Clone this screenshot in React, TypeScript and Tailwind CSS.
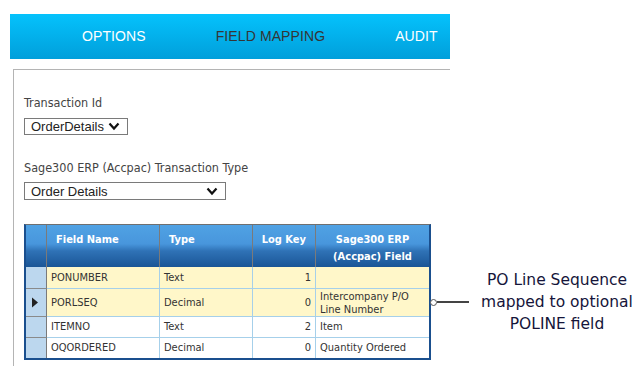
import React from 'react'

const gridFont = { fontFamily: '"DejaVu Sans Condensed", "DejaVu Sans", sans-serif' }

interface Row {
  name: string
  type: string
  logKey: string
  field: string[]
  tall?: boolean
  yellow?: boolean
  current?: boolean
}

const rows: Row[] = [
  { name: 'PONUMBER', type: 'Text', logKey: '1', field: [], yellow: true },
  { name: 'PORLSEQ', type: 'Decimal', logKey: '0', field: ['Intercompany P/O', 'Line Number'], tall: true, yellow: true, current: true },
  { name: 'ITEMNO', type: 'Text', logKey: '2', field: ['Item'] },
  { name: 'OQORDERED', type: 'Decimal', logKey: '0', field: ['Quantity Ordered'] },
]

const Chevron = () => (
  <svg width="12" height="9" viewBox="0 0 12 9" className="shrink-0">
    <path d="M1.5 1.5 L6 6.5 L10.5 1.5" fill="none" stroke="#111" strokeWidth="2.2" />
  </svg>
)

const Select: React.FC<{ value: string; width: string; height: string }> = ({ value, width, height }) => (
  <div
    className={`flex items-center justify-between border border-[#7a7a7a] pl-[6px] pr-[7px] text-[13px] leading-none text-[#222] ${width} ${height}`}
    style={{ fontFamily: '"Liberation Sans", Arial, sans-serif' }}
  >
    <span>{value}</span>
    <Chevron />
  </div>
)

const GridTable = () => (
  <div className="w-[407px] shrink-0 border-x-2 border-b-2 border-t border-x-[#1a4f8e] border-b-[#1a4f8e] border-t-[#6f6f6f]" style={gridFont}>
    <div
      className="flex h-[42px] text-[11px] font-bold leading-[17px] text-white"
      style={{ background: 'linear-gradient(to bottom, #50a2e4 0%, #4896dc 45%, #2f72b6 62%, #1a5596 100%)' }}
    >
      <div className="w-[21px] shrink-0 border-r border-[#7a7a7a]" />
      <div className="w-[113px] shrink-0 border-r border-[#7a7a7a] pl-[9px] pt-[6px]">Field Name</div>
      <div className="w-[93px] shrink-0 border-r border-[#7a7a7a] pl-[9px] pt-[6px]">Type</div>
      <div className="w-[63px] shrink-0 border-r border-[#7a7a7a] pr-[9px] pt-[6px] text-right">Log Key</div>
      <div className="flex-1 pt-[6px] text-center">
        Sage300 ERP
        <br />
        (Accpac) Field
      </div>
    </div>
    {rows.map((r, i) => (
      <div
        key={r.name}
        className={`flex text-[11px] text-[#333] ${r.tall ? 'h-[28px] leading-[13px]' : 'h-[21px] leading-[20px]'} ${r.yellow ? 'bg-[#fff7c9]' : 'bg-white'}`}
      >
        <div className={`flex w-[21px] shrink-0 items-center justify-center border-r border-[#7a7a7a] bg-[#bcd7ee] ${i > 0 ? 'border-t border-t-[#8a8a8a]' : ''}`}>
          {r.current && (
            <svg width="8" height="11" viewBox="0 0 8 11" className="-ml-[2px]">
              <path d="M1 0.5 L7 5.5 L1 10.5 Z" fill="#222" />
            </svg>
          )}
        </div>
        <div className={`flex w-[113px] shrink-0 items-center border-r border-[#a6d0ea] pl-[4px] ${i > 0 ? 'border-t border-t-[#a6d0ea]' : ''}`}>{r.name}</div>
        <div className={`flex w-[93px] shrink-0 items-center border-r border-[#a6d0ea] pl-[4px] ${i > 0 ? 'border-t border-t-[#a6d0ea]' : ''}`}>{r.type}</div>
        <div className={`flex w-[63px] shrink-0 items-center justify-end border-r border-[#a6d0ea] pr-[4px] ${i > 0 ? 'border-t border-t-[#a6d0ea]' : ''}`}>{r.logKey}</div>
        <div className={`flex flex-1 flex-col justify-center pl-[4px] ${i > 0 ? 'border-t border-t-[#a6d0ea]' : ''}`}>
          {r.field.map((f) => (
            <span key={f}>{f}</span>
          ))}
        </div>
      </div>
    ))}
  </div>
)

const Callout = () => (
  <div className="mt-[45px] flex items-center">
    <div className="ml-[-1px] h-[7px] w-[7px] shrink-0 rounded-full border-[1.5px] border-[#555] bg-white" />
    <div className="h-[2px] w-[32px] shrink-0 bg-[#444]" />
    <div
      className="ml-[6px] w-[164px] shrink-0 text-center text-[15.5px] leading-[22px] text-[#15153a]"
      style={{ fontFamily: '"DejaVu Sans", sans-serif' }}
    >
      PO Line Sequence
      <br />
      mapped to optional
      <br />
      POLINE field
    </div>
  </div>
)

export default function App() {
  return (
    <div className="h-[377px] w-[642px] overflow-hidden bg-white">
      <div className="pt-[14px] pl-[10px]">
        <div
          className="flex h-[45px] w-[440px] items-center gap-[70px] pl-[72px] text-[14px] tracking-[0.1px] bg-gradient-to-b from-[#05c2fc] to-[#019fdb]"
          style={{ fontFamily: '"Liberation Sans", Arial, sans-serif' }}
        >
          <span className="text-white">OPTIONS</span>
          <span className="text-[#353535]">FIELD MAPPING</span>
          <span className="text-white">AUDIT</span>
        </div>
      </div>
      <div className="ml-[13px] mt-[10px] h-[297px] w-[437px] border-l border-t border-[#b4b4b4] pl-[10px] pt-[25px]">
        <div className="text-[12.5px] leading-[16px] text-[#444]" style={gridFont}>
          Transaction Id
        </div>
        <div className="mt-[7px]">
          <Select value="OrderDetails" width="w-[104px]" height="h-[17px]" />
        </div>
        <div className="mt-[25px] text-[12.5px] leading-[16px] text-[#444]" style={gridFont}>
          Sage300 ERP (Accpac) Transaction Type
        </div>
        <div className="mt-[6px]">
          <Select value="Order Details" width="w-[202px]" height="h-[18px]" />
        </div>
        <div className="mt-[24px] flex items-start">
          <GridTable />
          <Callout />
        </div>
      </div>
    </div>
  )
}
